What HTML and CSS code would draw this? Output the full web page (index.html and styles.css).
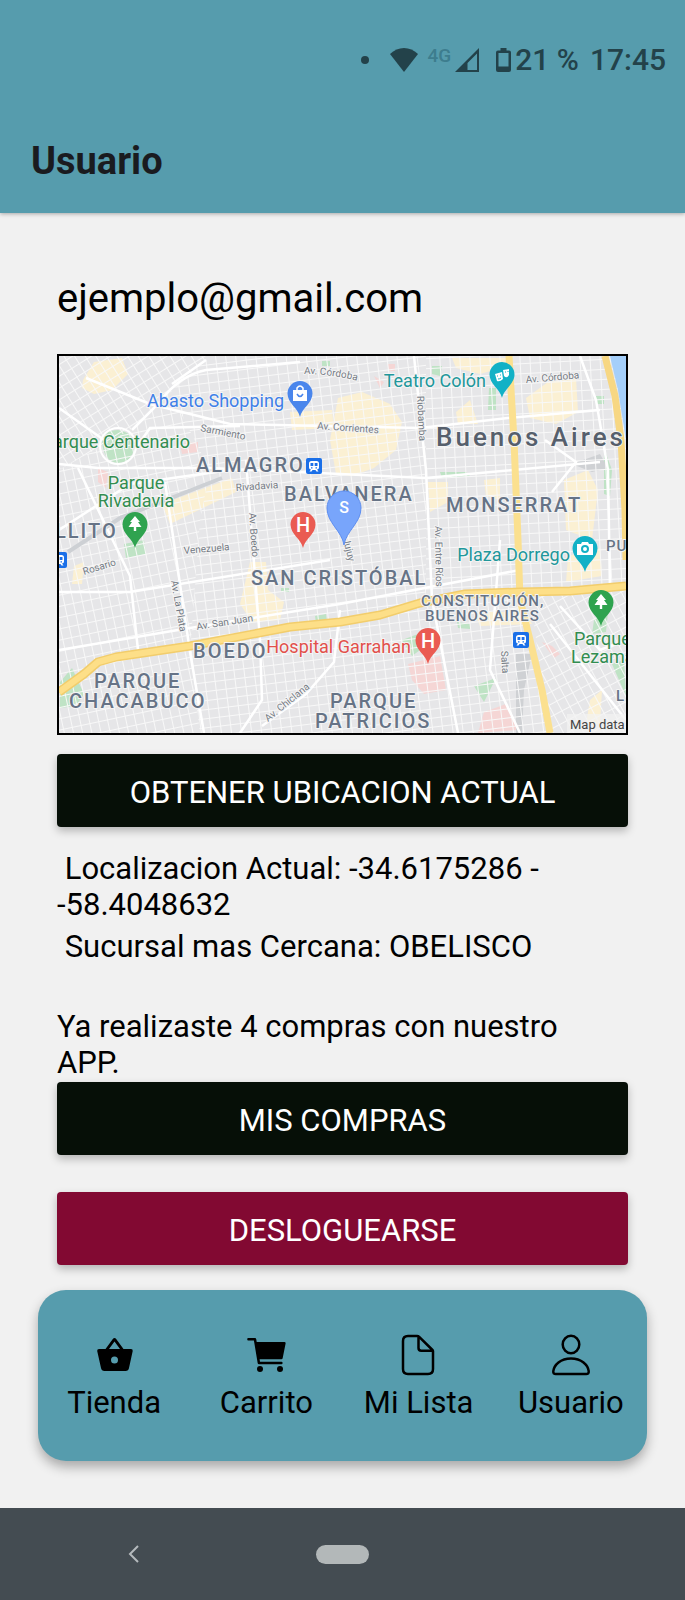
FILE: index.html
```html
<!DOCTYPE html>
<html lang="es">
<head>
<meta charset="utf-8">
<meta name="viewport" content="width=device-width, initial-scale=1">
<title>Usuario</title>
<link rel="stylesheet" href="styles.css">
</head>
<body>
<header class="header">
  <div class="status">
    <svg class="status-dot" viewBox="0 0 8 8" aria-hidden="true"><circle cx="4" cy="4" r="4"/></svg>
    <svg class="status-wifi" viewBox="0 0 28 24" aria-hidden="true"><path d="M0 6C8-2 20-2 28 6L14 24Z"/></svg>
    <span class="status-net">4G</span>
    <svg class="status-signal" viewBox="0 0 24 24" aria-hidden="true"><path fill-rule="evenodd" d="M24 0V24H0ZM22 5.500L12.500 15V22H22Z"/></svg>
    <svg class="status-battery" viewBox="0 0 15 24" aria-hidden="true"><path fill-rule="evenodd" d="M4.500 0H10.500V2.500H13Q15 2.500 15 4.500V22Q15 24 13 24H2Q0 24 0 22V4.500Q0 2.500 2 2.500H4.500ZM2.500 5V18.500H12.500V5Z"/></svg>
    <span class="status-level">21 %</span>
    <time class="status-time">17:45</time>
  </div>
  <h1 class="title">Usuario</h1>
</header>

<main class="content">
  <p class="email">ejemplo@gmail.com</p>

  <svg class="map" viewBox="59 356 567 377" role="img" aria-label="Mapa de Buenos Aires">
    <defs>
      <pattern id="grid-nw" width="9" height="10" patternUnits="userSpaceOnUse" patternTransform="rotate(-32)"><path class="street" d="M0 0H9M0 0V10"/></pattern>
      <pattern id="grid-w" width="9" height="11" patternUnits="userSpaceOnUse" patternTransform="rotate(-12)"><path class="street" d="M0 0H9M0 0V11"/></pattern>
      <pattern id="grid-c" width="10" height="9" patternUnits="userSpaceOnUse" patternTransform="rotate(-7)"><path class="street" d="M0 0H10M0 0V9"/></pattern>
      <pattern id="grid-e" width="10" height="10" patternUnits="userSpaceOnUse" patternTransform="rotate(-3)"><path class="street" d="M0 0H10M0 0V10"/></pattern>
      <pattern id="grid-se" width="9" height="11" patternUnits="userSpaceOnUse" patternTransform="rotate(-28)"><path class="street" d="M0 0H9M0 0V11"/></pattern>
      <g id="pin"><path d="M0 36C-2 27-12.500 22-12.500 12.500A12.500 12.500 0 0 1 12.500 12.500C12.500 22 2 27 0 36Z"/></g>
      <g id="tree" fill="#fff"><path d="M0 4L5 10H3L6.500 15H1.200V19H-1.200V15H-6.500L-3 10H-5Z"/></g>
      <g id="metro"><rect width="16" height="16" rx="2" fill="#1a6fe8"/><path fill="#fff" fill-rule="evenodd" d="M5.500 3H10.500Q13 3 13 5.500V9.500Q13 11.500 11 11.500L12.500 13.500H10.500L9.500 12H6.500L5.500 13.500H3.500L5 11.500Q3 11.500 3 9.500V5.500Q3 3 5.500 3ZM4.500 5V8H7.300V5ZM8.700 5V8H11.500V5ZM5 9.300V10.500H6.500V9.300ZM9.500 9.300V10.500H11V9.300Z"/></g>
      <path id="curve-cordoba" d="M304 374Q330 374 358 381"/>
    </defs>

    <rect x="59" y="356" width="567" height="377" fill="#e6e6e8"/>

    <g fill="#fbf0d3">
      <path d="M83 380L94 362 122 358 128 374 112 390 94 394 82 388Z"/>
      <path d="M338 398L362 392 390 404 402 422 396 450 374 468 352 476 336 474 330 440Z"/>
      <path d="M290 412L332 410 334 428 292 430Z"/>
      <path d="M526 398L548 382 576 378 578 412 556 424 530 418Z"/>
      <path d="M456 412L470 400 478 424 458 424ZM452 358H508V366L480 374 456 368Z"/>
      <path d="M428 482H448V502L430 512ZM484 480L500 478 500 500 486 496Z"/>
      <path d="M564 480L588 470 598 490 592 540 566 530Z"/>
      <path d="M250 562L266 562 268 590 284 602 280 620 252 622 240 604Z"/>
      <path d="M162 504L232 478 236 492 170 524ZM74 566L84 562 82 584 72 584Z"/>
      <path d="M568 556L600 548 602 576 566 582ZM474 612L526 612 532 624 480 626ZM590 700L602 690 600 724 586 724Z"/>
    </g>
    <g fill="#f5d6d5">
      <path d="M408 664L440 656 446 690 424 694 412 680ZM484 712L506 704 518 730 478 733ZM542 642L552 646 560 654 554 658Z"/>
      <path d="M180 444L198 442 198 452 182 454ZM98 468L108 472 106 488 98 482ZM374 376L384 382 380 388ZM388 364H395V371H388Z"/>
    </g>
    <g fill="#bfe3c5">
      <path d="M102 442Q104 430 118 430 134 432 134 448 132 462 118 463 104 462 102 442Z"/>
      <path d="M124 544L144 540 146 554 126 558ZM60 682L72 668 84 694 76 706 60 708Z"/>
      <path d="M474 686L496 678 484 702ZM594 620L608 612 606 632 592 634ZM612 664L624 660 626 696Z"/>
      <path d="M440 472L466 472 470 476 442 478ZM489 388H496V410H488ZM432 366L442 366 440 376 432 374ZM604 448L612 470 610 496 604 494ZM596 396H604V404H597Z"/>
      <path d="M315 616L326 614 327 622 316 623ZM457 622L470 624 470 629 458 628ZM281 588H289V592H281ZM402 640L418 634 420 650 412 656ZM322 361H330V366H322Z"/>
    </g>
    <path fill="#cfd1d4" d="M572 464L600 454 608 468 592 472ZM516 654H532L524 690 522 733H516Z"/>

    <path fill="url(#grid-nw)" d="M59 356H210L130 430 59 470Z"/>
    <path fill="url(#grid-w)" d="M59 470L130 430 170 392 210 470 200 520 190 652 59 690Z"/>
    <path fill="url(#grid-c)" d="M210 356H426V733H200L190 652 200 520 210 470 170 392Z"/>
    <path fill="url(#grid-e)" d="M426 356H626V590L530 592 426 600Z"/>
    <path fill="url(#grid-se)" d="M530 592L626 588V733H548Z"/>
    <path fill="url(#grid-c)" d="M426 600L520 594 548 733H426Z"/>
    <path fill="url(#grid-w)" d="M59 690L190 652 200 733H59Z"/>

    <g fill="none" stroke="#fff" stroke-width="2.500">
      <path d="M59 408L104 440M132 430L160 402Q178 376 206 370L300 362M86 378L150 404 230 424 420 428 508 418 600 410"/>
      <path d="M136 448L150 428 240 426M59 464L98 468 210 468 426 478 600 462M59 592L130 592 330 560"/>
      <path d="M78 468L130 576 138 650M165 482L190 652 204 733M246 460L260 640 262 700 240 733M340 610L334 662 306 694 262 726"/>
      <path d="M414 356L426 470 432 600 458 733M580 356L596 400 608 470 610 590M500 540L490 670 520 733M545 440L576 462 552 492M206 360L172 384M59 530L130 484 230 470"/>
      <path d="M59 650L190 628 340 604 520 570M550 624L626 720M560 606L600 650 626 640"/>
    </g>
    <path d="M68 552L120 518 222 478" fill="none" stroke="#cdd0d4" stroke-width="4"/>
    <circle cx="118" cy="446" r="18" fill="none" stroke="#fff" stroke-width="2"/>

    <path fill="#a5cffa" d="M610 356H626V440L618 390Z"/>
    <g fill="none" stroke-linejoin="round">
      <path stroke="#f7d783" stroke-width="7" d="M605 356L615 396 621 440 625 510 626 560"/>
      <path stroke="#fbe08f" stroke-width="7" d="M509 356L514 440 518 540 520 600 530 640 542 690 550 733"/>
      <path stroke="#f2cd6c" stroke-width="9" d="M59 692L84 674 98 662 116 657 190 646 290 627 340 622 380 615 420 603 465 594 520 592 570 591 626 586"/>
      <path stroke="#fddf88" stroke-width="6" d="M59 692L84 674 98 662 116 657 190 646 290 627 340 622 380 615 420 603 465 594 520 592 570 591 626 586"/>
    </g>

    <g class="road">
      <text><textPath href="#curve-cordoba">Av. Córdoba</textPath></text>
      <text transform="translate(526 383) rotate(-5)">Av. Córdoba</text>
      <text transform="translate(417 396) rotate(87)">Riobamba</text>
      <text transform="translate(317 429) rotate(4)">Av. Corrientes</text>
      <text transform="translate(200 431) rotate(11)">Sarmiento</text>
      <text transform="translate(236 491) rotate(-4)">Rivadavia</text>
      <text transform="translate(84 575) rotate(-17)">Rosario</text>
      <text transform="translate(184 554) rotate(-5)">Venezuela</text>
      <text transform="translate(249 513) rotate(86)">Av. Boedo</text>
      <text transform="translate(171 581) rotate(80)">Av. La Plata</text>
      <text transform="translate(197 630) rotate(-9)">Av. San Juan</text>
      <text transform="translate(268 722) rotate(-39)">Av. Chiclana</text>
      <text transform="translate(435 526) rotate(89)">Av. Entre Ríos</text>
      <text transform="translate(501 651) rotate(87)">Salta</text>
      <text transform="translate(343 539) rotate(76)">Jujuy</text>
    </g>

    <g class="district">
      <text x="196" y="472">ALMAGRO</text>
      <text x="284" y="501">BALVANERA</text>
      <text x="55" y="538">LLITO</text>
      <text x="446" y="512">MONSERRAT</text>
      <text x="251" y="585">SAN CRISTÓBAL</text>
      <text x="193" y="658">BOEDO</text>
      <text x="94" y="688">PARQUE</text>
      <text x="69" y="708">CHACABUCO</text>
      <text x="330" y="708">PARQUE</text>
      <text x="315" y="728">PATRICIOS</text>
    </g>
    <g class="district district-small">
      <text x="421" y="606">CONSTITUCIÓN,</text>
      <text x="425" y="621">BUENOS AIRES</text>
      <text x="606" y="551">PU</text>
      <text x="616" y="701">L</text>
    </g>
    <text class="city" x="436" y="446">Buenos Aires</text>

    <g class="place">
      <text class="shop" x="284" y="407" text-anchor="end">Abasto Shopping</text>
      <text class="culture" x="486" y="387" text-anchor="end">Teatro Colón</text>
      <text class="culture" x="570" y="561" text-anchor="end">Plaza Dorrego</text>
      <text class="park" x="190" y="448" text-anchor="end">Parque Centenario</text>
      <text class="park" x="136" y="489" text-anchor="middle">Parque</text>
      <text class="park" x="136" y="507" text-anchor="middle">Rivadavia</text>
      <text class="park" x="574" y="645">Parque</text>
      <text class="park" x="571" y="663">Lezama</text>
      <text class="hospital" x="411" y="653" text-anchor="end">Hospital Garrahan</text>
    </g>

    <use href="#metro" x="306" y="458"/>
    <use href="#metro" x="513" y="632"/>
    <use href="#metro" x="51" y="552"/>

    <g transform="translate(300 381)">
      <use href="#pin" fill="#4a86ec"/>
      <path fill="#fff" d="M-7 9H7V20H-7Z"/>
      <path fill="none" stroke="#fff" stroke-width="1.500" d="M-3 9V7Q0 3 3 7V9"/>
      <path fill="none" stroke="#4a86ec" stroke-width="1.500" d="M-3 13Q0 18 3 13"/>
    </g>
    <g transform="translate(502 362)">
      <use href="#pin" fill="#12b1c6"/>
      <path fill="#fff" d="M-7 12L0 10 1 17Q-2 20-5 19ZM1 8L7 7V13Q5 17 2 14Z"/>
      <path fill="none" stroke="#12b1c6" d="M-5 14H-4M-2 13H-1M-4 17Q-2 17-1 16M3 10H4M5.500 9.500H6.500"/>
    </g>
    <g transform="translate(585 536)">
      <use href="#pin" fill="#12b1c6"/>
      <path fill="#fff" fill-rule="evenodd" d="M-8 8H-4L-3 6H3L4 8H8V19H-8ZM0 9A4 4 0 0 0 0 17 4 4 0 0 0 0 9ZM0 11A2 2 0 0 1 0 15 2 2 0 0 1 0 11Z"/>
    </g>
    <g transform="translate(135 512)"><use href="#pin" fill="#2fa34f"/><use href="#tree"/></g>
    <g transform="translate(601 590)"><use href="#pin" fill="#2fa34f"/><use href="#tree"/></g>
    <g transform="translate(303 512)"><use href="#pin" fill="#ea5b52"/><text class="pin-letter" y="20">H</text></g>
    <g transform="translate(428 628)"><use href="#pin" fill="#ea5b52"/><text class="pin-letter" y="20">H</text></g>
    <g transform="translate(344 491)">
      <path fill="#78a5fb" stroke="#5f8ff0" d="M0 54C-2 40-17 32-17 17A17 17 0 0 1 17 17C17 32 2 40 0 54Z"/>
      <text class="pin-letter pin-branch" y="22">S</text>
    </g>

    <rect x="567" y="714" width="59" height="19" fill="#f2f2f2" opacity=".7"/>
    <text class="credit" x="570" y="729">Map data</text>
  </svg>

  <button class="btn" type="button">OBTENER UBICACION ACTUAL</button>
  <p class="info"> Localizacion Actual: -34.6175286 -<br>-58.4048632</p>
  <p class="info branch"> Sucursal mas Cercana: OBELISCO</p>
  <p class="info purchases">Ya realizaste 4 compras con nuestro<br>APP.</p>
  <button class="btn btn-purchases" type="button">MIS COMPRAS</button>
  <button class="btn btn-logout" type="button">DESLOGUEARSE</button>
</main>

<nav class="tabs">
  <a class="tab" href="#tienda">
    <svg class="tab-icon" viewBox="0 0 44 44" aria-hidden="true"><path fill-rule="evenodd" d="M22.500 5Q23.400 5 24 5.800L31.500 16H39Q41 16 40.700 18L37 35Q36.500 38 33.500 38H12.500Q9.500 38 9 35L5.200 18Q5 16 7 16H13.500L21 5.800Q21.600 5 22.500 5ZM22.500 8.500L17 16H28ZM22.500 23.500A3.500 3.500 0 0 0 22.500 30.500 3.500 3.500 0 0 0 22.500 23.500Z"/></svg>
    <span>Tienda</span>
  </a>
  <a class="tab" href="#carrito">
    <svg class="tab-icon" viewBox="0 0 44 44" aria-hidden="true"><path fill-rule="evenodd" d="M4.300 5H11Q12 5 12.200 6L12.700 9H40.500Q41.800 9 41.600 10.500L38.700 25Q38.500 26.200 37.300 26.200H15.600L16 28.800H37.500Q38.600 28.800 38.600 30T37.500 31.300H15Q13.900 31.300 13.700 30.200L9.900 7.400H4.300Q3.200 7.400 3.200 6.200T4.300 5Z"/><circle cx="16" cy="36" r="3"/><circle cx="36" cy="36" r="3"/></svg>
    <span>Carrito</span>
  </a>
  <a class="tab" href="#lista">
    <svg class="tab-icon tab-icon-line" viewBox="1 0 44 44" aria-hidden="true"><path d="M37 18V36Q37 41 32 41H12Q7 41 7 36V8Q7 3 12 3H21Q22.300 3 23.200 3.900L36 16.500Q37 17.500 37 18ZM22.500 3.500V15Q22.500 17.700 25.200 17.700H36.500"/></svg>
    <span>Mi Lista</span>
  </a>
  <a class="tab" href="#usuario" aria-current="page">
    <svg class="tab-icon tab-icon-line" viewBox="0 0 44 44" aria-hidden="true"><ellipse cx="22" cy="11.500" rx="8.300" ry="8.800"/><path d="M22 25.500C11.500 25.500 5 32 4.300 38.200Q4 41 6.800 41H37.200Q40 41 39.700 38.200C39 32 32.500 25.500 22 25.500Z"/></svg>
    <span>Usuario</span>
  </a>
</nav>

<footer class="system">
  <button class="system-back" type="button" aria-label="Atrás"><svg viewBox="0 0 12 20" aria-hidden="true"><path d="M10 2L2 10L10 18"/></svg></button>
  <button class="system-home" type="button" aria-label="Inicio"></button>
</footer>
</body>
</html>
```
FILE: styles.css
```css
* {
  box-sizing: border-box;
}

body {
  margin: 0;
  min-height: 100vh;
  display: flex;
  flex-direction: column;
  background: #f1f1f1;
  color: #000;
  font-family: Roboto, "Liberation Sans", sans-serif;
}

p,
h1 {
  margin: 0;
}

.header {
  background: #569cad;
  box-shadow: 0 1px 4px rgba(0, 0, 0, 0.3);
  padding: 40px 19px 28px 31px;
}

.status {
  display: flex;
  align-items: center;
  justify-content: flex-end;
  height: 40px;
  color: #23424a;
  fill: #23424a;
  font-size: 30px;
  font-weight: 500;
  line-height: 40px;
}

.status-dot {
  width: 8px;
  margin-right: 21px;
}

.status-wifi {
  width: 28px;
  margin-right: 9px;
}

.status-net {
  align-self: flex-start;
  margin-right: 4px;
  color: #3d7d8e;
  font-size: 19px;
  line-height: 32px;
}

.status-signal {
  width: 24px;
  margin-right: 17px;
}

.status-battery {
  width: 15px;
  margin-right: 4px;
}

.status-level {
  margin-right: 11px;
}

.title {
  margin-top: 57px;
  color: #1a1b1f;
  font-size: 38px;
  font-weight: 700;
  line-height: 48px;
}

.content {
  display: flex;
  flex-direction: column;
  padding: 60px 57px 0;
}

.email {
  font-size: 40px;
  line-height: 52px;
}

.map {
  display: block;
  width: 100%;
  margin-top: 29px;
  border: 2px solid #000;
}

.street {
  fill: none;
  stroke: #f8f8f8;
  stroke-width: 2;
}

.road {
  fill: #757b84;
  font-size: 10px;
}

.road text,
.district text,
.place text,
.city {
  paint-order: stroke;
  stroke: #f4f4f4;
  stroke-width: 2px;
  stroke-linejoin: round;
}

.district {
  fill: #667386;
  font-size: 20px;
  font-weight: 500;
  letter-spacing: 2px;
}

.district-small {
  font-size: 15px;
  letter-spacing: 1px;
}

.city {
  fill: #565f6c;
  font-size: 26px;
  font-weight: 500;
  letter-spacing: 3px;
}

.place {
  font-size: 18px;
}

.shop {
  fill: #3f80e8;
}

.culture {
  fill: #21979b;
}

.park {
  fill: #328d50;
}

.hospital {
  fill: #e2504b;
}

.pin-letter {
  fill: #fff;
  font-size: 20px;
  font-weight: 500;
  text-anchor: middle;
}

.pin-branch {
  font-size: 16px;
}

.credit {
  fill: #444;
  font-size: 13px;
}

.btn {
  width: 100%;
  height: 73px;
  margin-top: 19px;
  padding: 3px 0 0;
  border: 0;
  border-radius: 4px;
  background: #060f07;
  box-shadow: 0 4px 8px rgba(0, 0, 0, 0.25);
  color: #fff;
  font-family: inherit;
  font-size: 31px;
}

.btn-purchases {
  margin-top: 1px;
}

.btn-logout {
  margin-top: 37px;
  background: #820932;
}

.info {
  font-size: 31px;
  line-height: 36px;
  white-space: pre-wrap;
}

.btn + .info {
  margin-top: 24px;
}

.branch {
  margin-top: 6px;
}

.purchases {
  margin-top: 44px;
}

.tabs {
  display: grid;
  grid-template-columns: repeat(4, 1fr);
  margin: 25px 38px 47px;
  padding: 43px 0 40px;
  border-radius: 28px;
  background: #569cad;
  box-shadow: 0 6px 12px rgba(0, 0, 0, 0.3);
}

.tab {
  display: flex;
  flex-direction: column;
  align-items: center;
  gap: 8px;
  color: #000;
  font-size: 31px;
  line-height: 36px;
  text-decoration: none;
}

.tab-icon {
  width: 44px;
  height: 44px;
}

.tab-icon-line {
  fill: none;
  stroke: #000;
  stroke-width: 2.5;
  stroke-linejoin: round;
}

.system {
  display: grid;
  grid-template-columns: 1fr auto 1fr;
  align-items: center;
  height: 92px;
  margin-top: auto;
  background: #444c52;
}

.system-back {
  justify-self: center;
  margin-left: -48px;
  padding: 0;
  border: 0;
  background: none;
}

.system-back svg {
  display: block;
  width: 12px;
  fill: none;
  stroke: #b5babd;
  stroke-width: 2;
}

.system-home {
  width: 53px;
  height: 19px;
  padding: 0;
  border: 0;
  border-radius: 10px;
  background: #b3b8b9;
}
```
